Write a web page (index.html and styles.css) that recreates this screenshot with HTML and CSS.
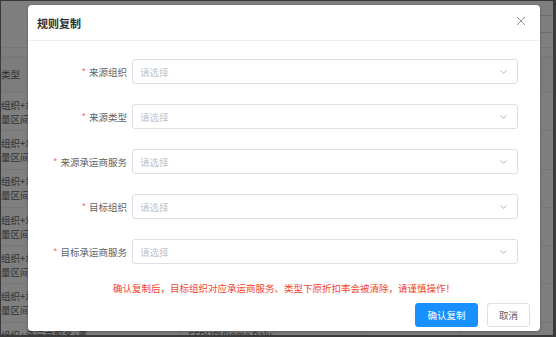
FILE: index.html
```html
<!DOCTYPE html>
<html lang="zh-CN">
<head>
    <meta charset="UTF-8">
    <title>规则复制</title>
    <link rel="stylesheet" href="styles.css">
</head>
<body>

<div class="frame">
    <div class="page">
        <div class="toolbar">
            <div class="bg-select">
                <svg width="7" height="4" viewBox="0 0 7 4"><path d="M0.5 0.5 L3.5 3.3 L6.5 0.5" fill="none" stroke="#303133" stroke-width="0.9"/></svg>
            </div>
        </div>
        <div class="strip"></div>
        <div class="thead">类型</div>
        <div class="trow">组织+承运<br>量区间</div>
        <div class="trow">组织+承运<br>量区间</div>
        <div class="trow">组织+承运<br>量区间</div>
        <div class="trow">组织+承运<br>量区间</div>
        <div class="trow">组织+承运<br>量区间</div>
        <div class="trow">组织+承运<br>量区间</div>
        <div class="tfoot">
            <span class="cell">组织+承运商服务+费</span>
            <span class="cell"></span>
            <span class="cell">EFDUDVIIome Dalux</span>
            <span class="cell"></span>
            <span class="cell"></span>
            <span class="cell"></span>
        </div>
    </div>

    <div class="mask"></div>

    <div class="dialog">
        <div class="dialog-header">
            <span class="dialog-title">规则复制</span>
            <svg class="close" width="10" height="10" viewBox="0 0 10 10"><path d="M1 1 L9 9 M9 1 L1 9" stroke="#909399" stroke-width="1"/></svg>
        </div>

        <div class="dialog-body">
            <div class="form-row">
                <label class="form-label"><span class="star">*</span>来源组织</label>
                <div class="select"><span>请选择</span><svg width="7" height="4" viewBox="0 0 7 4"><path d="M0.5 0.5 L3.5 3.3 L6.5 0.5" fill="none" stroke="#a8abb2" stroke-width="0.9"/></svg></div>
            </div>
            <div class="form-row">
                <label class="form-label"><span class="star">*</span>来源类型</label>
                <div class="select"><span>请选择</span><svg width="7" height="4" viewBox="0 0 7 4"><path d="M0.5 0.5 L3.5 3.3 L6.5 0.5" fill="none" stroke="#a8abb2" stroke-width="0.9"/></svg></div>
            </div>
            <div class="form-row">
                <label class="form-label"><span class="star">*</span>来源承运商服务</label>
                <div class="select"><span>请选择</span><svg width="7" height="4" viewBox="0 0 7 4"><path d="M0.5 0.5 L3.5 3.3 L6.5 0.5" fill="none" stroke="#a8abb2" stroke-width="0.9"/></svg></div>
            </div>
            <div class="form-row">
                <label class="form-label"><span class="star">*</span>目标组织</label>
                <div class="select"><span>请选择</span><svg width="7" height="4" viewBox="0 0 7 4"><path d="M0.5 0.5 L3.5 3.3 L6.5 0.5" fill="none" stroke="#a8abb2" stroke-width="0.9"/></svg></div>
            </div>
            <div class="form-row">
                <label class="form-label"><span class="star">*</span>目标承运商服务</label>
                <div class="select"><span>请选择</span><svg width="7" height="4" viewBox="0 0 7 4"><path d="M0.5 0.5 L3.5 3.3 L6.5 0.5" fill="none" stroke="#a8abb2" stroke-width="0.9"/></svg></div>
            </div>

            <div class="warning">确认复制后，目标组织对应承运商服务、类型下原折扣率会被清除，请谨慎操作！</div>
        </div>

        <div class="dialog-footer">
            <button class="btn btn-primary">确认复制</button>
            <button class="btn">取消</button>
        </div>
    </div>
</div>

</body>
</html>
```

FILE: styles.css
```css
body, html {
    margin: 0;
    padding: 0;
    font-family: "Noto Sans CJK SC", "Noto Sans", sans-serif;
    background: #333;
}

.frame {
    position: relative;
    width: 556px;
    height: 337px;
    box-sizing: border-box;
    border-style: solid;
    border-color: #3a3a3a;
    border-width: 1px 3px 2px 1px;
    overflow: hidden;
}

/* page behind the dialog */
.page {
    background: #fff;
    height: 100%;
    font-size: 9.5px;
    color: #606266;
}

.toolbar {
    height: 46px;
    border-bottom: 1px solid #ebeef5;
    display: flex;
    justify-content: flex-end;
    align-items: center;
}

.bg-select {
    width: 80px;
    height: 18px;
    margin-right: -20px;
    border: 1px solid #dcdfe6;
    border-radius: 3px;
    box-sizing: border-box;
    display: flex;
    align-items: center;
    padding-left: 68px;
}

.strip {
    height: 8px;
    border-bottom: 1px solid #ebeef5;
}

.thead {
    height: 35px;
    line-height: 35px;
    border-bottom: 1px solid #ebeef5;
    background: #f8f9fb;
    color: #606266;
}

.trow {
    height: 37.3px;
    border-bottom: 1px solid #ebeef5;
    display: flex;
    flex-direction: column;
    justify-content: center;
    line-height: 14px;
}

.tfoot {
    display: flex;
    height: 30px;
    line-height: 12px;
    padding-top: 6px;
}

.tfoot .cell {
    width: 96px;
    border-right: 1px solid #ebeef5;
    white-space: nowrap;
    overflow: hidden;
}

.tfoot .cell:first-child {
    width: 89px;
}

.tfoot .cell:nth-child(3) {
    padding-left: 8px;
    width: 88px;
}

.mask {
    position: absolute;
    top: 0;
    left: 0;
    right: 0;
    bottom: 0;
    background: rgba(0, 0, 0, 0.5);
}

/* dialog */
.dialog {
    position: absolute;
    left: 27px;
    top: 4px;
    width: 512px;
    height: 326px;
    background: #fff;
    border-radius: 4px;
    box-shadow: 0 1px 3px rgba(0, 0, 0, 0.3);
    display: flex;
    flex-direction: column;
}

.dialog-header {
    height: 35px;
    border-bottom: 1px solid #ebeef5;
    display: flex;
    justify-content: space-between;
    align-items: center;
    padding: 0 14px 0 9px;
}

.dialog-title {
    font-size: 11px;
    font-weight: bold;
    color: #303133;
}

.close {
    margin-top: -3px;
}

.dialog-body {
    padding-top: 18px;
}

.form-row {
    display: flex;
    align-items: center;
    height: 25px;
    margin-bottom: 20px;
}

.form-row:nth-child(5) {
    margin-bottom: 0;
}

.form-label {
    width: 104px;
    box-sizing: border-box;
    padding-right: 5px;
    text-align: right;
    font-size: 9.5px;
    color: #606266;
}

.star {
    color: #f56c6c;
    margin-right: 3px;
}

.select {
    width: 386px;
    height: 25px;
    box-sizing: border-box;
    border: 1px solid #dcdfe6;
    border-radius: 3px;
    display: flex;
    justify-content: space-between;
    align-items: center;
    padding: 0 10px 0 7px;
    font-size: 9.5px;
    color: #c0c4cc;
}

.warning {
    margin-top: 17px;
    text-align: center;
    font-size: 9.5px;
    line-height: 14px;
    color: #f2452b;
}

.dialog-footer {
    display: flex;
    justify-content: flex-end;
    gap: 9px;
    padding: 8px 10px 0 0;
}

.btn {
    height: 24px;
    padding: 0 10px;
    font-family: inherit;
    font-size: 9.5px;
    color: #606266;
    background: #fff;
    border: 1px solid #dcdfe6;
    border-radius: 3px;
    cursor: pointer;
}

.btn-primary {
    width: 63px;
    color: #fff;
    background: #1890ff;
    border-color: #1890ff;
}

.btn:last-child {
    width: 43px;
}
```
